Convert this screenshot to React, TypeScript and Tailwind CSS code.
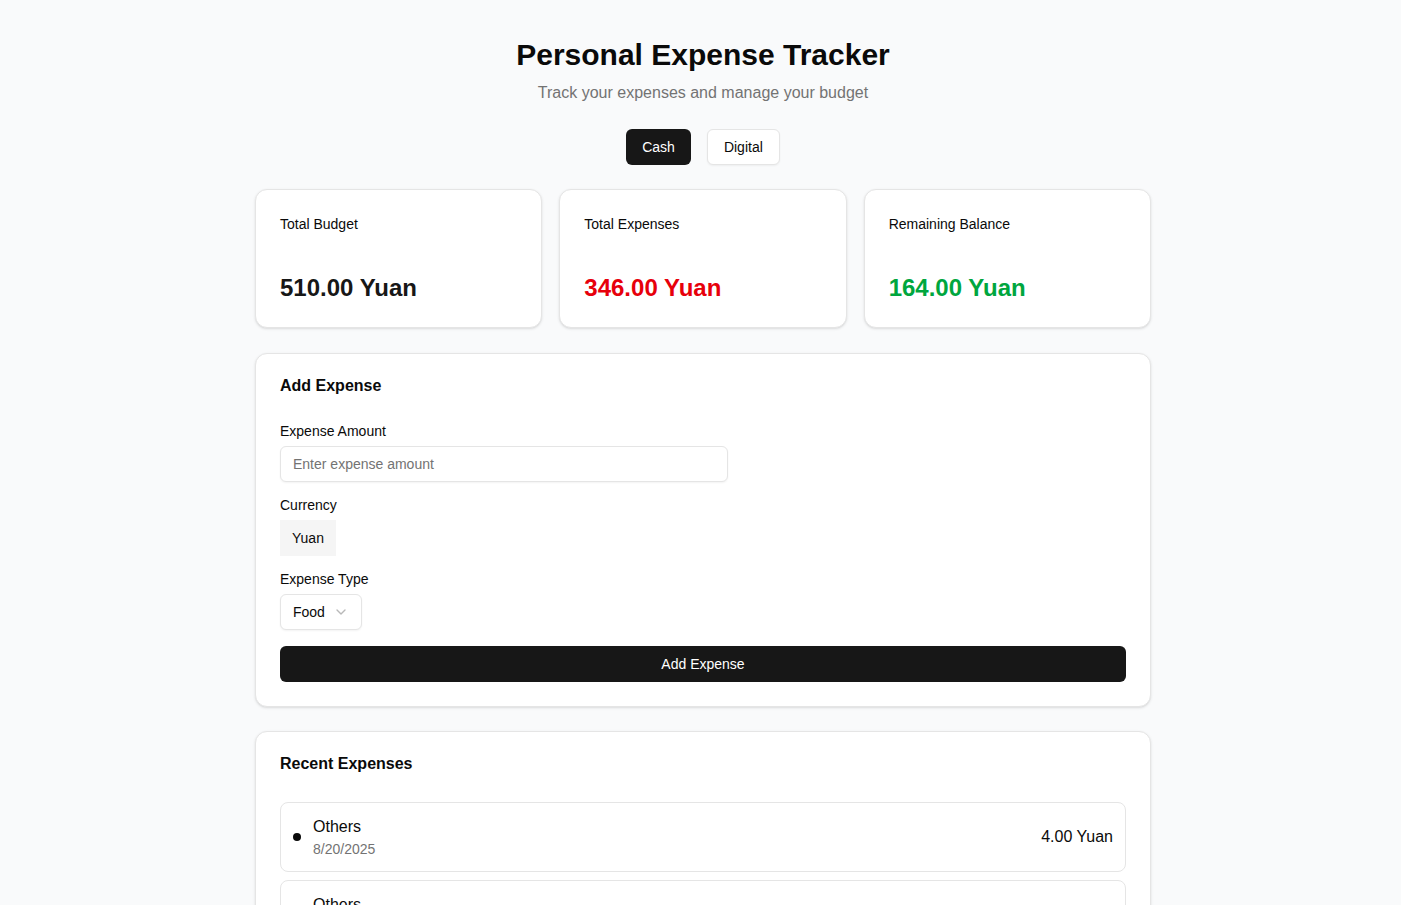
import { useState, type FunctionComponent } from 'react'
import { ChevronDown } from 'lucide-react'

interface Expense {
  id: number
  type: string
  date: string
  amount: number
}

const expenses: Expense[] = [
  { id: 1, type: 'Others', date: '8/20/2025', amount: 4 },
  { id: 2, type: 'Others', date: '8/20/2025', amount: 12 },
  { id: 3, type: 'Food', date: '8/19/2025', amount: 30 }
]

interface StatCardProps {
  label: string
  value: string
  color: string
}

const StatCard: FunctionComponent<StatCardProps> = ({ label, value, color }) => {
  return (
    <div className="flex h-[139px] flex-col rounded-xl border border-[#e5e5e5] bg-white p-6 shadow-sm">
      <p className="text-sm leading-5 text-[#0a0a0a]">{label}</p>
      <p className={'mt-[38px] text-2xl leading-8 font-bold ' + color}>{value}</p>
    </div>
  )
}

const App: FunctionComponent = () => {
  const [mode, setMode] = useState<'cash' | 'digital'>('cash')
  const [amount, setAmount] = useState<string>('')

  return (
    <div className="min-h-screen bg-[#f9fafb] pl-[5px] font-['Liberation_Sans',Arial,sans-serif] text-[#0a0a0a]">
      <div className="mx-auto w-[896px] pt-[37px] pb-10">
        {/* header */}
        <div className="flex flex-col items-center">
          <h1 className="text-3xl leading-9 font-bold text-[#0a0a0a]">Personal Expense Tracker</h1>
          <p className="mt-2 text-base leading-6 text-[#737373]">Track your expenses and manage your budget</p>
          <div className="mt-6 flex flex-row gap-4">
            <button
              onClick={() => setMode('cash')}
              className={
                mode === 'cash'
                  ? 'h-9 rounded-md bg-[#171717] px-4 text-sm text-white'
                  : 'h-9 rounded-md border border-[#e5e5e5] bg-white px-4 text-sm text-[#0a0a0a] shadow-xs'
              }
            >
              Cash
            </button>
            <button
              onClick={() => setMode('digital')}
              className={
                mode === 'digital'
                  ? 'h-9 rounded-md bg-[#171717] px-4 text-sm text-white'
                  : 'h-9 rounded-md border border-[#e5e5e5] bg-white px-4 text-sm text-[#0a0a0a] shadow-xs'
              }
            >
              Digital
            </button>
          </div>
        </div>

        {/* summary */}
        <div className="mt-6 grid grid-cols-3 gap-[17px]">
          <StatCard label="Total Budget" value="510.00 Yuan" color="text-[#171717]" />
          <StatCard label="Total Expenses" value="346.00 Yuan" color="text-[#e7000b]" />
          <StatCard label="Remaining Balance" value="164.00 Yuan" color="text-[#00a63e]" />
        </div>

        {/* add expense */}
        <div className="mt-[25px] rounded-xl border border-[#e5e5e5] bg-white px-6 py-6 shadow-sm">
          <h2 className="text-base leading-none font-semibold">Add Expense</h2>
          <div className="mt-[30px] flex flex-col">
            <label className="text-sm leading-none">Expense Amount</label>
            <input
              value={amount}
              onChange={(e) => setAmount(e.target.value)}
              placeholder="Enter expense amount"
              className="mt-2 h-9 w-[448px] rounded-md border border-[#e5e5e5] bg-white px-3 text-sm shadow-xs outline-none placeholder:text-[#737373]"
            />

            <label className="mt-4 text-sm leading-none">Currency</label>
            <div className="mt-2 flex h-9 w-[56px] items-center bg-[#f5f5f5] px-3 text-sm">Yuan</div>

            <label className="mt-4 text-sm leading-none">Expense Type</label>
            <button className="mt-2 flex h-9 w-[82px] flex-row items-center gap-2 rounded-md border border-[#e5e5e5] bg-white px-3 text-sm shadow-xs">
              Food
              <ChevronDown className="size-4 text-[#737373] opacity-50" />
            </button>

            <button className="mt-4 h-9 w-full rounded-md bg-[#171717] text-sm text-white">Add Expense</button>
          </div>
        </div>

        {/* recent expenses */}
        <div className="mt-6 rounded-xl border border-[#e5e5e5] bg-white px-6 py-6 shadow-sm">
          <h2 className="text-base leading-none font-semibold">Recent Expenses</h2>
          <div className="mt-[30px] flex flex-col gap-2">
            {expenses.map((e) => (
              <div
                key={e.id}
                className="flex flex-row items-center justify-between rounded-lg border border-[#e5e5e5] p-3"
              >
                <div className="flex flex-row items-center gap-3">
                  <span className="size-2 rounded-full bg-[#0a0a0a]" />
                  <div className="flex flex-col">
                    <span className="text-base leading-6">{e.type}</span>
                    <span className="text-sm leading-5 text-[#737373]">{e.date}</span>
                  </div>
                </div>
                <span className="text-base">{e.amount.toFixed(2)} Yuan</span>
              </div>
            ))}
          </div>
        </div>
      </div>
    </div>
  )
}

export default App
